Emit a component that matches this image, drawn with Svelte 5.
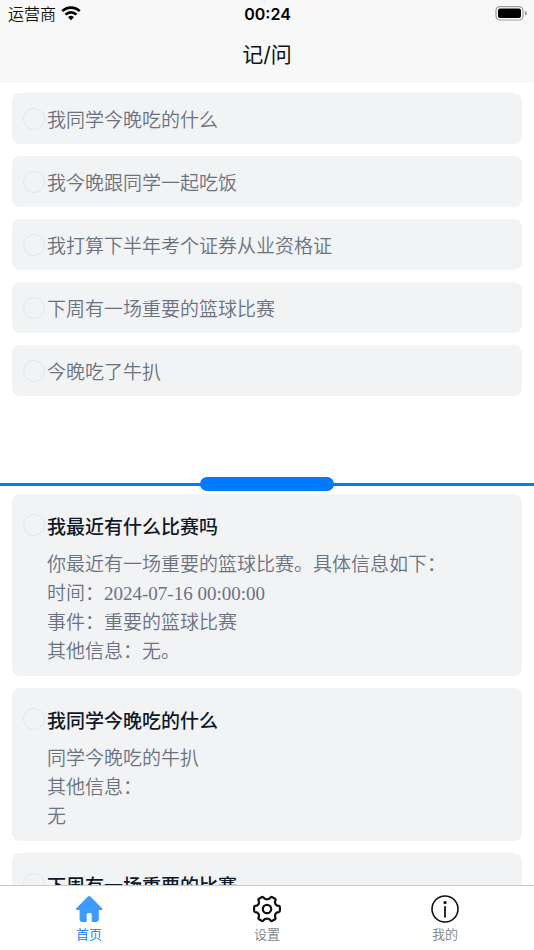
<script>
  const notes = $state([
    { text: '我同学今晚吃的什么', done: false },
    { text: '我今晚跟同学一起吃饭', done: false },
    { text: '我打算下半年考个证券从业资格证', done: false },
    { text: '下周有一场重要的篮球比赛', done: false },
    { text: '今晚吃了牛扒', done: false }
  ]);

  const answers = $state([
    {
      question: '我最近有什么比赛吗',
      lines: [
        '你最近有一场重要的篮球比赛。具体信息如下：',
        '时间：2024-07-16 00:00:00',
        '事件：重要的篮球比赛',
        '其他信息：无。'
      ],
      done: false
    },
    {
      question: '我同学今晚吃的什么',
      lines: ['同学今晚吃的牛扒', '其他信息：', '无'],
      done: false
    },
    { question: '下周有一场重要的比赛', lines: [], done: false }
  ]);
</script>

<div class="app">
  <header>
    <div class="status">
      <span class="carrier">
        运营商
        <svg width="20" height="16" viewBox="0 0 20 16" fill="none" stroke="#000" stroke-width="2.7" aria-hidden="true">
          <path d="M1.3 5.1a12.4 12.4 0 0 1 17.4 0" />
          <path d="M4.5 8.6a7.8 7.8 0 0 1 11 0" />
          <path d="M7.1 11.3a4.1 4.1 0 0 1 5.8 0L10 14.2z" fill="#000" stroke="none" />
        </svg>
      </span>
      <span class="time">00:24</span>
      <span class="battery">
        <svg width="32" height="16" viewBox="0 0 32 16" aria-hidden="true">
          <rect x="1" y=".6" width="27" height="13.4" rx="4" fill="#fff" stroke="#999" stroke-width="1.2" />
          <rect x="3" y="2.600" width="23" height="9.4" rx="2" fill="#000" />
          <path d="M30 5q2 .6 2 2.3t-2 2.3z" fill="#999" />
        </svg>
      </span>
    </div>
    <h1>记/问</h1>
  </header>

  <main>
    <section class="pane notes">
      {#each notes as note}
        <label class="card note">
          <input type="checkbox" bind:checked={note.done} />
          <span>{note.text}</span>
        </label>
      {/each}
    </section>

    <div class="divider"><button class="handle" aria-label="调整分栏"></button></div>

    <section class="pane answers">
      {#each answers as item}
        <article class="card answer">
          <label class="question">
            <input type="checkbox" bind:checked={item.done} />
            <span>{item.question}</span>
          </label>
          <div class="detail">
            {#each item.lines as line}
              <p>{line}</p>
            {/each}
          </div>
        </article>
      {/each}
    </section>
  </main>

  <nav>
    <a class="active" href="#home">
      <svg width="28" height="28" viewBox="0 0 28 28" fill="#3d9bff" aria-hidden="true">
        <path d="M14.200 1q.6 0 1.200.5L27.200 13.400q.5.6.2 1.100-.3.400-1 .4H23.800V24.500q0 2.400-2.400 2.400H16.700V19.600q0-1.500-1.500-1.500h-2q-1.500 0-1.500 1.500V26.900H7q-2.400 0-2.400-2.400V14.900H2q-.7 0-1-.4-.3-.5.2-1.100L13 1.500q.6-.5 1.200-.5z" />
      </svg>
      首页
    </a>
    <a href="#settings">
      <svg width="28" height="28" viewBox="0 0 28 28" fill="none" stroke="#111" stroke-width="2.200" stroke-linejoin="round" aria-hidden="true">
        <path d="M8.600 2.200Q9.500 1.700 10.300 2.400C11 3.600 12.200 4.300 14 4.300S17 3.600 17.700 2.400Q18.500 1.700 19.400 2.200L22 3.700Q22.900 4.300 22.500 5.300C21.700 6.900 21.900 8 22.500 9.100S24 10.900 25.800 10.900Q26.900 11.100 26.900 12.200V15.800Q26.900 16.900 25.800 17.100C24 17.100 23.100 17.800 22.500 18.900S21.700 21.100 22.500 22.700Q22.900 23.700 22 24.300L19.400 25.800Q18.500 26.300 17.700 25.600C17 24.400 15.800 23.700 14 23.700S11 24.400 10.300 25.600Q9.500 26.300 8.600 25.800L6 24.300Q5.100 23.700 5.500 22.700C6.300 21.100 6.100 20 5.500 18.900S4 17.100 2.200 17.100Q1.100 16.900 1.100 15.800V12.200Q1.100 11.100 2.200 10.900C4 10.900 4.900 10.200 5.500 9.100S6.300 6.900 5.500 5.300Q5.100 4.300 6 3.700Z" />
        <circle cx="14" cy="14" r="4.200" />
      </svg>
      设置
    </a>
    <a href="#mine">
      <svg width="28" height="28" viewBox="0 0 28 28" aria-hidden="true">
        <circle cx="14" cy="14" r="13" fill="none" stroke="#111" stroke-width="1.600" />
        <circle cx="14" cy="7.600" r="1.600" fill="#111" />
        <path d="M14 11.800v10" stroke="#111" stroke-width="1.800" stroke-linecap="round" />
      </svg>
      我的
    </a>
  </nav>
</div>

<style>
  .app {
    height: 100vh;
    display: flex;
    flex-direction: column;
    background: #fff;
    color: #6b7280;
    font-family: "Liberation Serif", "Noto Sans CJK SC", serif;
    font-size: 19px;
    font-weight: 350;
  }

  header {
    background: #f8f8f8;
    color: #111;
    height: 83px;
    font-family: Inter, "Noto Sans CJK SC", sans-serif;
  }

  .status {
    display: grid;
    grid-template-columns: 1fr auto 1fr;
    align-items: center;
    height: 28px;
    padding: 0 7px 0 8px;
    font-size: 16px;
    line-height: 28px;
  }

  .carrier {
    display: flex;
    align-items: center;
    gap: 5px;
  }

  .time {
    color: #000;
    font-weight: 600;
  }

  .battery {
    display: flex;
    justify-content: flex-end;
  }

  h1 {
    margin: 0;
    text-align: center;
    font-size: 21px;
    font-weight: 400;
    line-height: 54px;
  }

  main {
    flex: 1;
    min-height: 0;
    display: grid;
    grid-template-rows: minmax(0, 1fr) auto minmax(0, 1fr);
  }

  .pane {
    display: flex;
    flex-direction: column;
    gap: 12px;
    padding: 10px 12px 0;
    overflow-y: auto;
    scrollbar-width: none;
  }

  .answers {
    padding-top: 3px;
  }

  .card {
    flex: none;
    background: #f2f3f5;
    border-radius: 8px;
    padding: 0 11px;
  }

  .note,
  .question {
    display: flex;
    align-items: center;
    gap: 2px;
  }

  .note {
    height: 51px;
  }

  .question {
    height: 30px;
    color: #111827;
    font-weight: 500;
  }

  .answer {
    padding-top: 16px;
    padding-bottom: 10px;
  }

  .detail {
    padding: 10px 0 0 24px;
  }

  p {
    margin: 0;
    line-height: 29px;
  }

  input {
    appearance: none;
    flex: none;
    width: 22px;
    height: 22px;
    margin: 0;
    border: 1px solid #e3e5e9;
    border-radius: 50%;
  }

  input:checked {
    background: #007aff;
    border-color: #007aff;
  }

  .divider {
    display: flex;
    justify-content: center;
    background: linear-gradient(#007aff, #007aff) center / 100% 3px no-repeat;
  }

  .handle {
    width: 25%;
    height: 14px;
    padding: 0;
    border: 0;
    border-radius: 7px;
    background: #007aff;
    cursor: row-resize;
  }

  nav {
    flex: none;
    display: flex;
    height: 64px;
    border-top: 1px solid #c8c9cc;
    background: #fff;
  }

  nav a {
    flex: 1;
    display: flex;
    flex-direction: column;
    align-items: center;
    gap: 1px;
    padding-top: 9px;
    color: #7a7e83;
    font-family: "Noto Sans CJK SC", sans-serif;
    font-size: 13px;
    line-height: 20px;
    text-decoration: none;
  }

  nav .active {
    color: #007aff;
  }
</style>
